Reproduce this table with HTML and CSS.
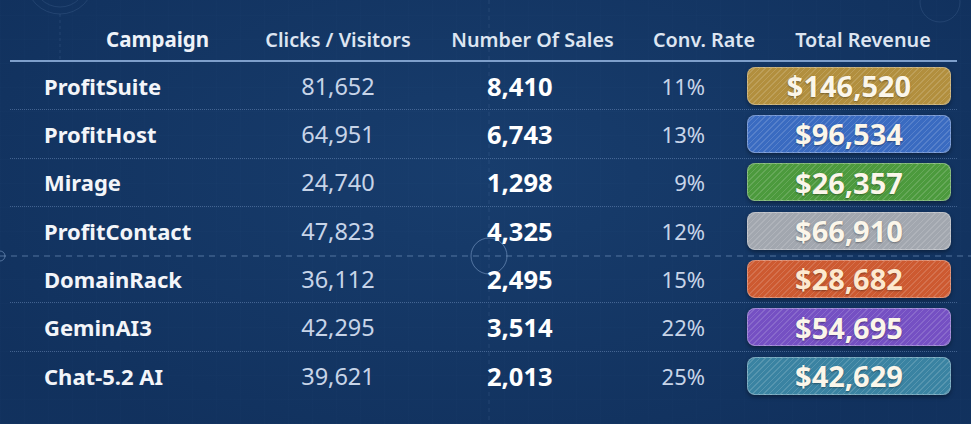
FILE: index.html
```html
<!DOCTYPE html>
<html lang="en">
<head>
<meta charset="utf-8">
<title>Campaign Revenue</title>
<link rel="stylesheet" href="styles.css">
</head>
<body>
<div class="page">
  <svg class="deco" width="971" height="424" viewBox="0 0 971 424" aria-hidden="true">
    <g fill="none" stroke="#6f8fbd" stroke-opacity="0.18" stroke-width="1">
      <circle cx="60" cy="-20" r="34"/>
      <circle cx="60" cy="-20" r="27"/>
      <line x1="60" y1="14" x2="60" y2="60" stroke-dasharray="3 3"/>
      <circle cx="940" cy="2" r="20"/>
      <line x1="489" y1="0" x2="489" y2="424" stroke-dasharray="4 4"/>
    </g>
    <g fill="none" stroke="#8fb0da" stroke-opacity="0.5" stroke-width="1">
      <line x1="0" y1="256" x2="971" y2="256" stroke-dasharray="6 5"/>
      <circle cx="489" cy="256" r="18"/>
      <circle cx="0" cy="256" r="5"/>
    </g>
  </svg>
  <div class="table">
    <div class="head">
      <div class="h h-name">Campaign</div>
      <div class="h h-clicks">Clicks / Visitors</div>
      <div class="h h-sales">Number Of Sales</div>
      <div class="h h-rate">Conv. Rate</div>
      <div class="h h-rev">Total Revenue</div>
    </div>
    <div class="row">
      <div class="name">ProfitSuite</div><div class="clicks">81,652</div><div class="sales">8,410</div><div class="rate">11%</div>
      <div class="rev"><span class="pill gold">$146,520</span></div>
    </div>
    <div class="row">
      <div class="name">ProfitHost</div><div class="clicks">64,951</div><div class="sales">6,743</div><div class="rate">13%</div>
      <div class="rev"><span class="pill blue">$96,534</span></div>
    </div>
    <div class="row">
      <div class="name">Mirage</div><div class="clicks">24,740</div><div class="sales">1,298</div><div class="rate">9%</div>
      <div class="rev"><span class="pill green">$26,357</span></div>
    </div>
    <div class="row row-dashed">
      <div class="name">ProfitContact</div><div class="clicks">47,823</div><div class="sales">4,325</div><div class="rate">12%</div>
      <div class="rev"><span class="pill gray">$66,910</span></div>
    </div>
    <div class="row">
      <div class="name">DomainRack</div><div class="clicks">36,112</div><div class="sales">2,495</div><div class="rate">15%</div>
      <div class="rev"><span class="pill orange">$28,682</span></div>
    </div>
    <div class="row">
      <div class="name">GeminAI3</div><div class="clicks">42,295</div><div class="sales">3,514</div><div class="rate">22%</div>
      <div class="rev"><span class="pill purple">$54,695</span></div>
    </div>
    <div class="row row-last">
      <div class="name">Chat-5.2 AI</div><div class="clicks">39,621</div><div class="sales">2,013</div><div class="rate">25%</div>
      <div class="rev"><span class="pill teal">$42,629</span></div>
    </div>
  </div>
</div>
</body>
</html>
```

FILE: styles.css
```css
html, body {
  margin: 0;
  padding: 0;
}
body {
  width: 971px;
  height: 424px;
  overflow: hidden;
  font-family: "Noto Sans", "Open Sans", sans-serif;
  background-color: #153968;
  background-image:
    radial-gradient(ellipse at 50% 40%, rgba(30, 70, 120, 0.3), rgba(10, 35, 75, 0.35) 85%),
    repeating-linear-gradient(0deg, rgba(120, 160, 210, 0.025) 0 1px, transparent 1px 24px),
    repeating-linear-gradient(90deg, rgba(120, 160, 210, 0.025) 0 1px, transparent 1px 24px);
}
.page {
  position: relative;
  width: 971px;
  height: 424px;
}
.deco {
  position: absolute;
  left: 0;
  top: 0;
  pointer-events: none;
  z-index: 0;
}
.table {
  position: relative;
  z-index: 1;
  margin-left: 10px;
  width: 947px;
}
.head, .row {
  display: grid;
  grid-template-columns: 240px 180px 205px 112px 210px;
  align-items: center;
}
.head {
  height: 60px;
  border-bottom: 2px solid #7e9fcb;
}
.h {
  font-weight: 600;
  font-size: 19.8px;
  color: #dde5f1;
  padding-top: 18px;
  white-space: nowrap;
}
.h-name { padding-left: 96px; font-weight: 700; font-size: 20.5px; color: #eef2f8; }
.h-clicks { text-align: center; padding-right: 4px; }
.h-sales { text-align: center; }
.h-rate { text-align: center; padding-left: 18px; }
.h-rev { text-align: center; padding-left: 22px; }
.row {
  height: 48.3px;
  box-sizing: border-box;
  border-bottom: 1px dotted rgba(140, 170, 215, 0.4);
}
.row-dashed {
  border-bottom-color: transparent;
}
.row-last {
  border-bottom: none;
}
.name {
  padding-left: 34px;
  font-weight: 700;
  font-size: 22px;
  color: #f3f5f9;
}
.clicks {
  text-align: center;
  font-size: 23.5px;
  color: #c7d4e8;
  padding-right: 4px;
}
.sales {
  padding-left: 57px;
  font-weight: 700;
  font-size: 25.5px;
  color: #ffffff;
}
.rate {
  text-align: right;
  padding-right: 42px;
  font-size: 22px;
  color: #c7d4e8;
}
.rev {
  display: flex;
  padding-right: 6px;
}
.pill {
  flex: 1;
  height: 38px;
  box-sizing: border-box;
  border-radius: 8px;
  display: flex;
  align-items: center;
  justify-content: center;
  font-weight: 700;
  font-size: 29px;
  color: #fbf6ea;
  text-shadow: 0 1px 2px rgba(0, 0, 0, 0.35);
  border: 1px solid rgba(255, 255, 255, 0.3);
  box-shadow: 0 2px 4px rgba(0, 0, 0, 0.35);
  background-image: repeating-linear-gradient(135deg, rgba(255, 255, 255, 0.14) 0 1px, transparent 1px 4px);
}
.gold { background-color: #b28f3e; }
.blue { background-color: #3a6bc1; }
.green { background-color: #4c9a3d; }
.gray { background-color: #a2a7af; }
.orange { background-color: #cd5a31; color: #fde9cf; }
.purple { background-color: #7550c3; }
.teal { background-color: #3a83a2; }
```
